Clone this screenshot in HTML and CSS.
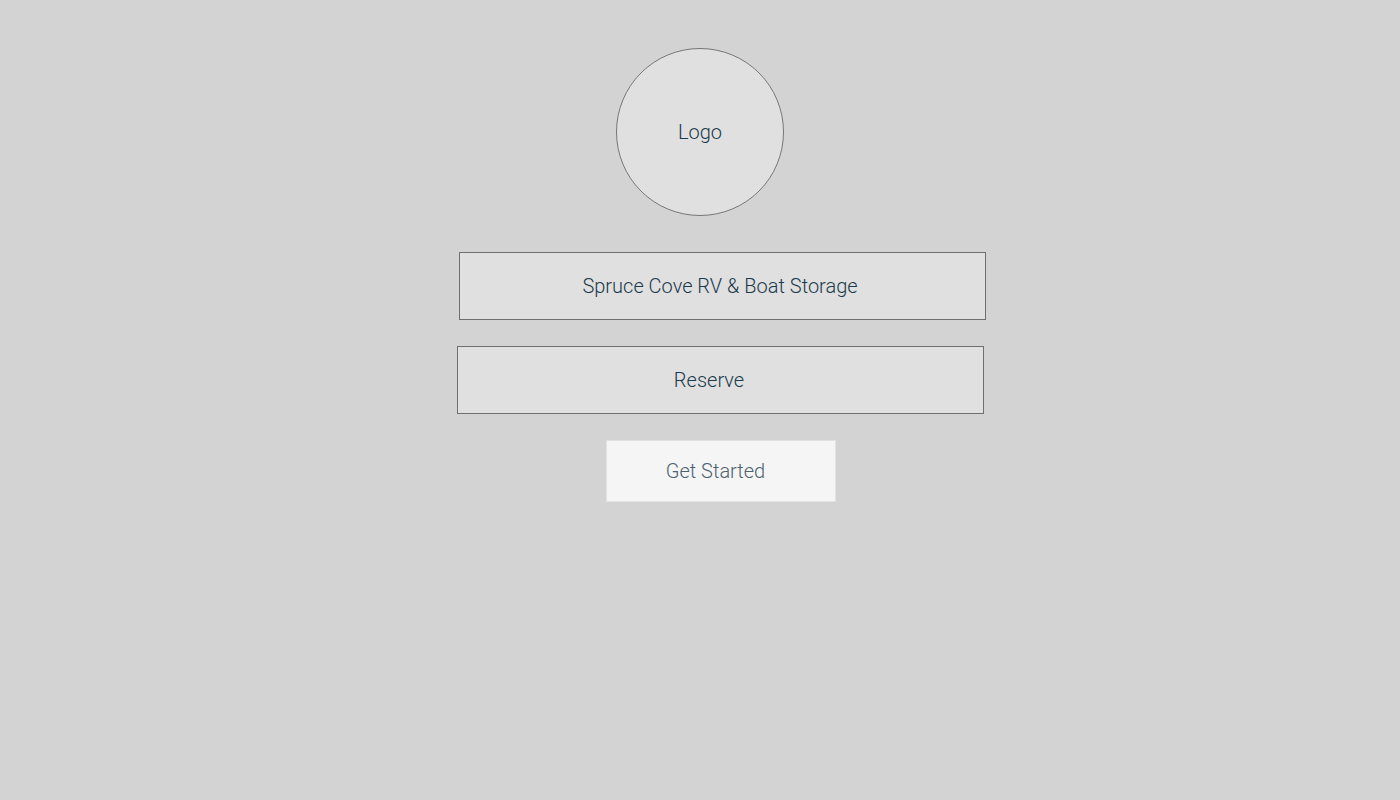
FILE: index.html
```html
<!DOCTYPE html>
<html>
<head>
<meta charset="utf-8">
<link rel="stylesheet" href="styles.css">
</head>
<body>
<main class="page">
  <div class="logo">Logo</div>
  <div class="box box-title">Spruce Cove RV &amp; Boat Storage</div>
  <div class="box box-reserve">Reserve</div>
  <button class="cta">Get Started</button>
</main>
</body>
</html>
```
FILE: styles.css
```css
html, body {
  margin: 0;
  padding: 0;
  background: #d3d3d3;
  height: 100%;
}
.page {
  display: flex;
  flex-direction: column;
  align-items: flex-start;
  padding-top: 48px;
  font-family: Roboto, "Liberation Sans", sans-serif;
  font-weight: 300;
  font-size: 20px;
  color: #1b3a4b;
}
.logo {
  box-sizing: border-box;
  width: 168px;
  height: 168px;
  margin-left: 616px;
  border: 1px solid #777;
  border-radius: 50%;
  background: #e0e0e0;
  display: flex;
  align-items: center;
  justify-content: center;
}
.box {
  box-sizing: border-box;
  width: 527px;
  height: 68px;
  border: 1px solid #6f6f6f;
  background: #e0e0e0;
  display: flex;
  align-items: center;
  justify-content: center;
}
.box-title {
  margin-top: 36px;
  margin-left: 459px;
  padding-right: 5px;
}
.box-reserve {
  margin-top: 26px;
  margin-left: 457px;
  padding-right: 23px;
}
.cta {
  box-sizing: border-box;
  margin-top: 26px;
  margin-left: 606px;
  width: 230px;
  height: 62px;
  border: 1px solid #e2e2e2;
  background: #f5f5f5;
  font-family: inherit;
  font-weight: 300;
  font-size: 20px;
  color: #4d6270;
  padding: 0 11px 0 0;
}
```
